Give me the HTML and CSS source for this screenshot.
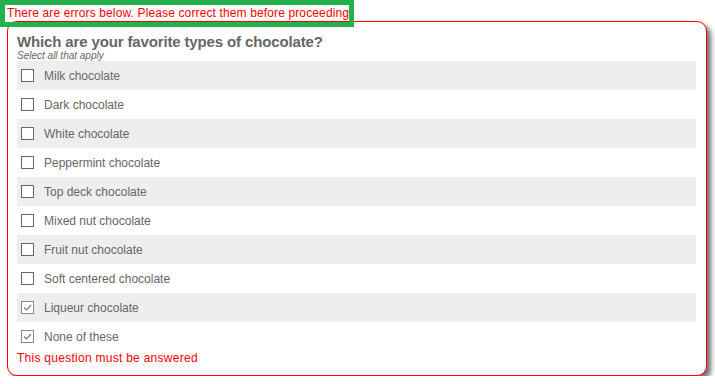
FILE: index.html
```html
<!DOCTYPE html>
<html lang="en">
  <head>
    <meta charset="UTF-8" />
    <title>Chocolate Survey</title>
    <link rel="stylesheet" href="styles.css">
  </head>
  <body>
    <div class="form-errors">There are errors below. Please correct them before proceeding</div>

    <div class="question">
      <h2>Which are your favorite types of chocolate?</h2>
      <div class="hint">Select all that apply</div>
      <ul class="options">
        <li><span class="box"></span>Milk chocolate</li>
        <li><span class="box"></span>Dark chocolate</li>
        <li><span class="box"></span>White chocolate</li>
        <li><span class="box"></span>Peppermint chocolate</li>
        <li><span class="box"></span>Top deck chocolate</li>
        <li><span class="box"></span>Mixed nut chocolate</li>
        <li><span class="box"></span>Fruit nut chocolate</li>
        <li><span class="box"></span>Soft centered chocolate</li>
        <li>
          <span class="box checked">
            <svg viewBox="0 0 11 11" width="11" height="11"><path d="M2 5.5 L4.5 8 L9 3" fill="none" stroke="#777" stroke-width="1.2"/></svg>
          </span>Liqueur chocolate
        </li>
        <li>
          <span class="box checked">
            <svg viewBox="0 0 11 11" width="11" height="11"><path d="M2 5.5 L4.5 8 L9 3" fill="none" stroke="#777" stroke-width="1.2"/></svg>
          </span>None of these
        </li>
      </ul>
      <div class="question-error">This question must be answered</div>
    </div>
  </body>
</html>
```

FILE: styles.css
```css
body {
  margin: 0;
  font-family: "Liberation Sans", Arial, sans-serif;
  background: #ffffff;
}

/* highlighted error summary, sits over the top edge of the card */
.form-errors {
  position: relative;
  z-index: 1;
  display: inline-block;
  border: 5px solid #22b14c;
  padding: 0 0 0 2px;
  height: 17px;
  line-height: 17px;
  font-size: 12px;
  letter-spacing: 0.13px;
  color: #ff0000;
  margin-bottom: -7px;
}

.question {
  margin-left: 7px;
  width: 679px;
  border: 1px solid #ff0000;
  border-radius: 10px;
  box-shadow: 4px 4px 5px #707070;
  padding: 11px 10px 10px 9px;
  background: #ffffff;
}

h2 {
  margin: 0;
  font-size: 15px;
  line-height: 17px;
  font-weight: bold;
  letter-spacing: -0.14px;
  color: #666666;
}

.hint {
  font-size: 10px;
  line-height: 11px;
  font-style: italic;
  color: #666666;
}

.options {
  list-style: none;
  margin: 0;
  padding: 0;
}

.options li {
  display: flex;
  align-items: center;
  height: 29px;
  padding-left: 4px;
  font-size: 12px;
  color: #666666;
}

.options li:nth-child(odd) {
  background-color: #eeeeee;
}

.box {
  width: 11px;
  height: 11px;
  border: 1px solid #666666;
  background: #ffffff;
  margin-right: 10px;
  display: flex;
}

.box.checked {
  border-color: #888888;
}

.question-error {
  font-size: 12px;
  line-height: 14px;
  letter-spacing: 0.27px;
  color: #ff0000;
}
```
